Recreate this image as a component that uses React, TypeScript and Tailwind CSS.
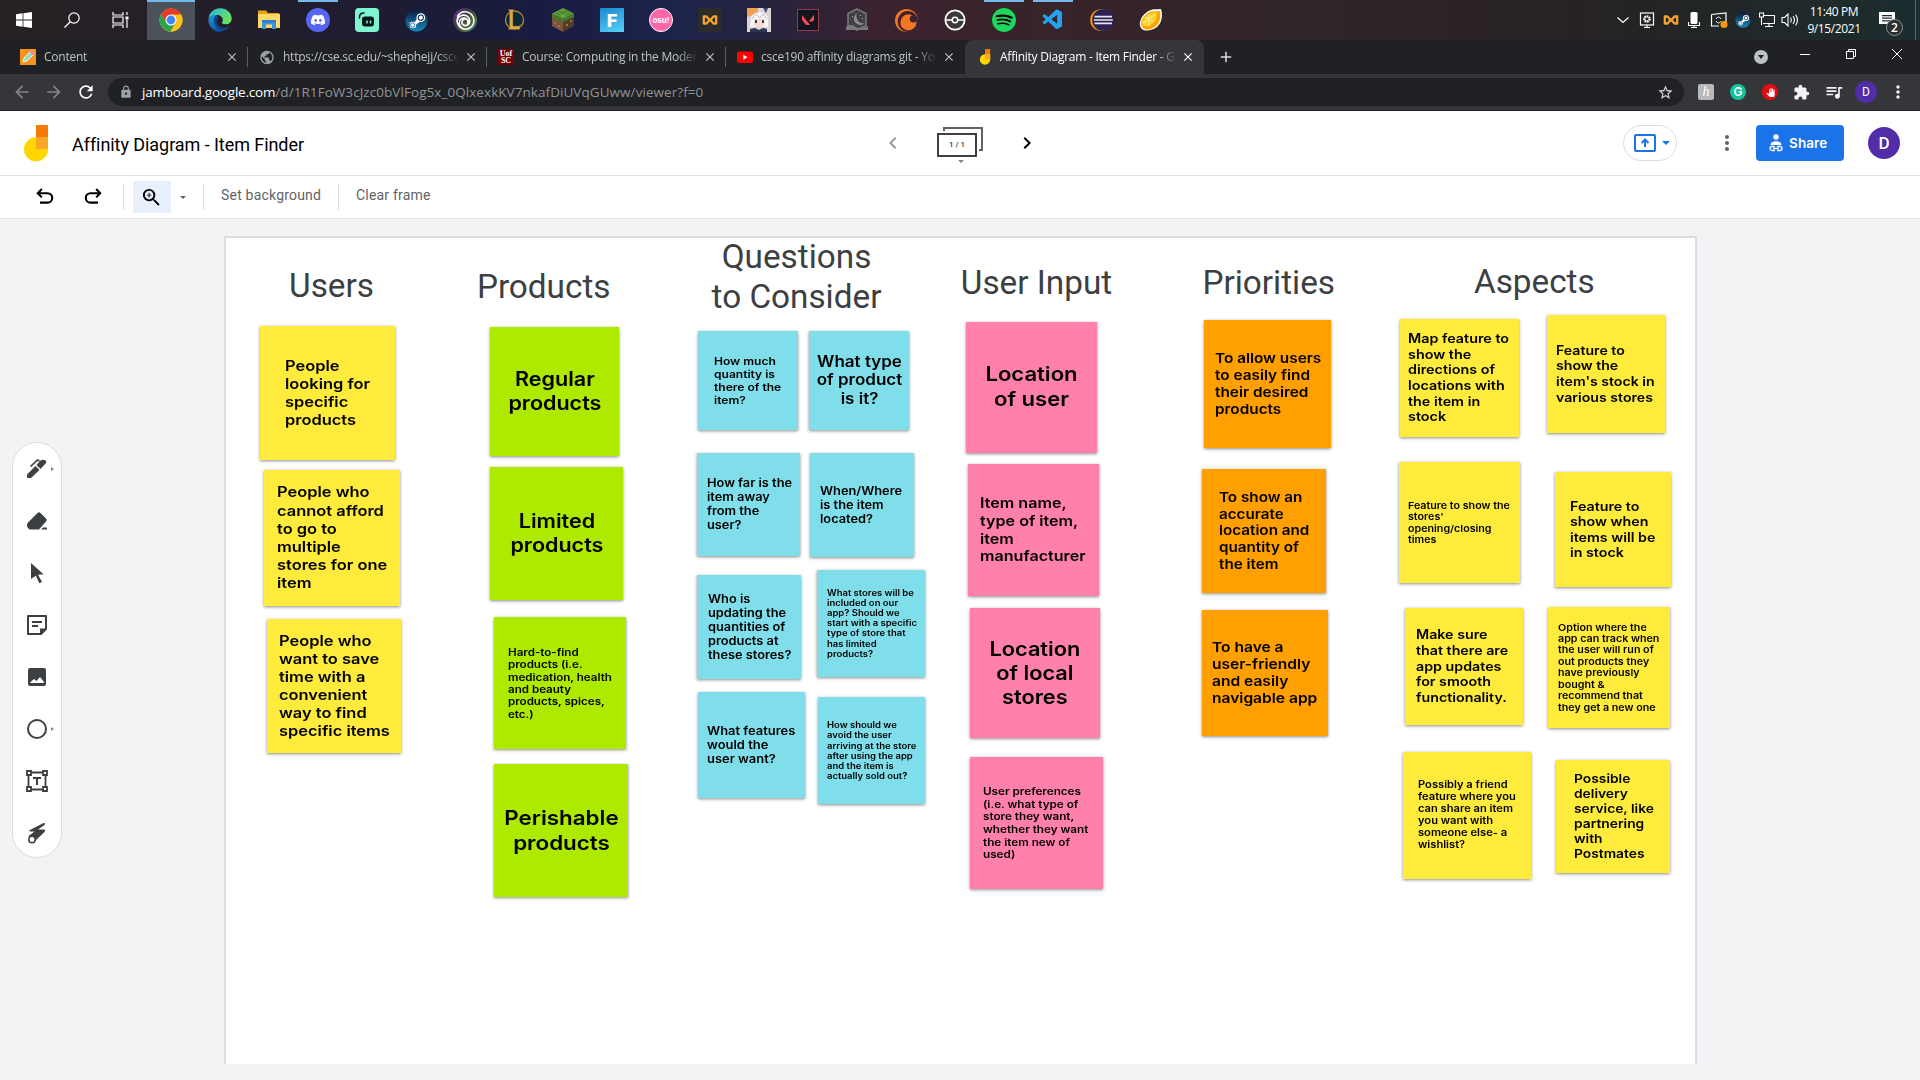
import React from 'react';
import { SiDiscord, SiUbisoft, SiSpotify, SiCrunchyroll, SiValorant } from 'react-icons/si';
import { VscVscode } from 'react-icons/vsc';
import {
  MdZoomIn, MdMoreVert, MdChevronLeft, MdChevronRight, MdArrowBack, MdArrowForward,
  MdRefresh, MdLock, MdStarBorder, MdExtension, MdQueueMusic, MdPublic, MdPanTool, MdClose, MdAdd,
} from 'react-icons/md';

type Note = {
  x: number; y: number; w: number; h: number;
  color: string; size: number; pitch: number;
  left?: number; lines: string[];
};

const Y = 'bg-[#ffeb3b]';
const G = 'bg-[#aeea00]';
const B = 'bg-[#80deea]';
const P = 'bg-[#ff80ab]';
const O = 'bg-[#ff9f00]';

const notes: Note[] = [
  { x: 259.7, y: 325.3, w: 135.3, h: 134.7, color: Y, size: 15, pitch: 18, left: 284.7, lines: ['People', 'looking for', 'specific', 'products'] },
  { x: 263.2, y: 470, w: 136.5, h: 136, color: Y, size: 15, pitch: 18.2, left: 277, lines: ['People who', 'cannot afford', 'to go to', 'multiple', 'stores for one', 'item'] },
  { x: 267, y: 619, w: 134.7, h: 134, color: Y, size: 15, pitch: 18, left: 279.6, lines: ['People who', 'want to save', 'time with a', 'convenient', 'way to find', 'specific items'] },
  { x: 490, y: 327, w: 129.3, h: 129, color: G, size: 20, pitch: 24.3, lines: ['Regular', 'products'] },
  { x: 490, y: 467, w: 133.5, h: 133, color: G, size: 20, pitch: 24, lines: ['Limited', 'products'] },
  { x: 494, y: 617, w: 132.3, h: 132, color: G, size: 10.4, pitch: 12.4, left: 508.3, lines: ['Hard-to-find', 'products (i.e.', 'medication, health', 'and beauty', 'products, spices,', 'etc.)'] },
  { x: 494, y: 763.3, w: 134, h: 134, color: G, size: 20.8, pitch: 25, lines: ['Perishable', 'products'] },
  { x: 697.8, y: 330.7, w: 100.2, h: 100, color: B, size: 10.8, pitch: 13, left: 713.7, lines: ['How much', 'quantity is', 'there of the', 'item?'] },
  { x: 809, y: 330.7, w: 100.2, h: 100, color: B, size: 15.8, pitch: 18.5, lines: ['What type', 'of product', 'is it?'] },
  { x: 696.7, y: 452.3, w: 103.8, h: 104, color: B, size: 11.7, pitch: 14, left: 706.7, lines: ['How far is the', 'item away', 'from the', 'user?'] },
  { x: 809.3, y: 452.3, w: 105, h: 105, color: B, size: 11.7, pitch: 14, left: 820.5, lines: ['When/Where', 'is the item', 'located?'] },
  { x: 696.7, y: 575, w: 104, h: 104.3, color: B, size: 11.7, pitch: 14, left: 708.5, lines: ['Who is', 'updating the', 'quantities of', 'products at', 'these stores?'] },
  { x: 817, y: 569.3, w: 108.5, h: 108, color: B, size: 8.5, pitch: 10.2, left: 826.7, lines: ['What stores will be', 'included on our', 'app? Should we', 'start with a specific', 'type of store that', 'has limited', 'products?'] },
  { x: 698, y: 691.5, w: 107, h: 106.5, color: B, size: 11.8, pitch: 14, left: 707.3, lines: ['What features', 'would the', 'user want?'] },
  { x: 817.3, y: 697, w: 107.5, h: 107.5, color: B, size: 8.5, pitch: 10.2, left: 827, lines: ['How should we', 'avoid the user', 'arriving at the store', 'after using the app', 'and the item is', 'actually sold out?'] },
  { x: 965.5, y: 321.3, w: 132, h: 132, color: P, size: 20.5, pitch: 25, lines: ['Location', 'of user'] },
  { x: 967.3, y: 463.3, w: 132.3, h: 132.7, color: P, size: 14.7, pitch: 17.7, left: 980.3, lines: ['Item name,', 'type of item,', 'item', 'manufacturer'] },
  { x: 969.7, y: 608, w: 130.3, h: 130, color: P, size: 20.2, pitch: 24, lines: ['Location', 'of local', 'stores'] },
  { x: 969.7, y: 756.5, w: 133.7, h: 133, color: P, size: 10.5, pitch: 12.6, left: 983.3, lines: ['User preferences', '(i.e. what type of', 'store they want,', 'whether they want', 'the item new of', 'used)'] },
  { x: 1203.6, y: 320, w: 128, h: 128, color: O, size: 14, pitch: 17, left: 1215, lines: ['To allow users', 'to easily find', 'their desired', 'products'] },
  { x: 1202, y: 468.5, w: 124.7, h: 124.5, color: O, size: 13.9, pitch: 16.7, left: 1219.5, lines: ['To show an', 'accurate', 'location and', 'quantity of', 'the item'] },
  { x: 1201.2, y: 609.5, w: 127.2, h: 127, color: O, size: 14.2, pitch: 17, left: 1212, lines: ['To have a', 'user-friendly', 'and easily', 'navigable app'] },
  { x: 1399.7, y: 318.7, w: 119.2, h: 118.5, color: Y, size: 13.1, pitch: 15.7, left: 1408.5, lines: ['Map feature to', 'show the', 'directions of', 'locations with', 'the item in', 'stock'] },
  { x: 1546.5, y: 314.7, w: 119, h: 118.5, color: Y, size: 12.9, pitch: 15.6, left: 1556, lines: ['Feature to', 'show the', "item's stock in", 'various stores'] },
  { x: 1398.3, y: 461.7, w: 122.3, h: 122, color: Y, size: 9.6, pitch: 11.4, left: 1408.3, lines: ['Feature to show the', "stores'", 'opening/closing', 'times'] },
  { x: 1554.8, y: 471.7, w: 116.5, h: 116, color: Y, size: 13, pitch: 15.3, left: 1570, lines: ['Feature to', 'show when', 'items will be', 'in stock'] },
  { x: 1404.5, y: 607.4, w: 118.8, h: 118, color: Y, size: 13, pitch: 15.6, left: 1416.5, lines: ['Make sure', 'that there are', 'app updates', 'for smooth', 'functionality.'] },
  { x: 1547.8, y: 606.5, w: 122.3, h: 121.6, color: Y, size: 9.6, pitch: 11.4, left: 1558.5, lines: ['Option where the', 'app can track when', 'the user will run of', 'out products they', 'have previously', 'bought &', 'recommend that', 'they get a new one'] },
  { x: 1402.7, y: 752, w: 128, h: 127, color: Y, size: 10, pitch: 12, left: 1418, lines: ['Possibly a friend', 'feature where you', 'can share an item', 'you want with', 'someone else- a', 'wishlist?'] },
  { x: 1556, y: 760, w: 113.8, h: 113, color: Y, size: 12.6, pitch: 15, left: 1574, lines: ['Possible', 'delivery', 'service, like', 'partnering', 'with', 'Postmates'] },
];

const headings = [
  { cx: 331.5, base: 297.5, lines: ['Users'] },
  { cx: 543.7, base: 298.5, lines: ['Products'] },
  { cx: 796.5, base: 268.5, lines: ['Questions', 'to Consider'] },
  { cx: 1036.5, base: 294.5, lines: ['User Input'] },
  { cx: 1268.7, base: 294.5, lines: ['Priorities'] },
  { cx: 1534.3, base: 293.5, lines: ['Aspects'] },
];

/* Screen coordinates of the board's inner corner. */
const OX = 226;
const OY = 238;

function Sticky({ n }: { n: Note }) {
  const centered = n.left === undefined;
  const small = n.size < 11;
  const stretch = centered ? 1.11 : small ? 1.15 : 1.13;
  return (
    <div
      className={`absolute flex items-center shadow-[0_1px_3px_rgba(0,0,0,0.45)] ${n.color} ${centered ? 'justify-center text-center' : ''}`}
      style={{ left: n.x - OX + 0.3, top: n.y - OY + 0.2, width: n.w - 0.5, height: n.h - 0.4, paddingLeft: centered ? 0 : n.left! - n.x - 0.4 }}
    >
      <div
        className={`whitespace-nowrap text-black ${small ? 'font-[560]' : 'font-semibold'} ${centered ? 'origin-center' : 'origin-left'}`}
        style={{ fontSize: n.size * 0.97, lineHeight: `${n.pitch}px`, transform: `scaleX(${stretch})` }}
      >
        {n.lines.map((l) => <div key={l}>{l}</div>)}
      </div>
    </div>
  );
}

/* ---------- taskbar icons ---------- */

const Chrome = () => (
  <svg viewBox="0 0 48 48" className="size-6">
    <circle cx="24" cy="24" r="23" fill="#fbc116" />
    <path d="M24 24 4.1 12.5A23 23 0 0 1 43.9 12.5Z" fill="#e33b2e" />
    <path d="M24 13h20.2A23 23 0 0 0 4 12.8L14.5 30Z" fill="#e33b2e" />
    <path d="M4.1 12.5A23 23 0 0 0 23 47L33.5 29.5 14.5 29.5Z" fill="#2ba24c" />
    <path d="M44.2 13H24l9.5 16.5L23 47A23 23 0 0 0 44.2 13Z" fill="#fbc116" />
    <circle cx="24" cy="24" r="11" fill="#fff" />
    <circle cx="24" cy="24" r="8.8" fill="#4285f4" />
  </svg>
);
const Edge = () => (
  <svg viewBox="0 0 24 24" className="size-6">
    <defs>
      <linearGradient id="e1" x1="0" y1="0" x2="1" y2="0.5"><stop offset="0" stopColor="#29b6ea" /><stop offset="1" stopColor="#6be25c" /></linearGradient>
      <linearGradient id="e2" x1="0" y1="0" x2="0.4" y2="1"><stop offset="0" stopColor="#1b9de2" /><stop offset="1" stopColor="#0b57a8" /></linearGradient>
    </defs>
    <path d="M.5 11C1 4.500 6 .3 12.200.3 18.500.3 23.700 5 23.700 10.500c0 3.500-2.700 5.800-6 5.800-2.500 0-3.900-.8-3.900-1.500 0-.6 1-1 1-2.900C14.800 9.300 12.400 7 9 7 4.500 7 1.500 9 .5 11Z" fill="url(#e1)" />
    <path d="M.4 11.500C1.500 8.500 5 6.700 9 7c-2 .8-3.300 3.500-3 6.500C6.500 18.500 11 22.500 16 22.200c-1.300 1-3 1.600-4.500 1.500C5 23.500.2 18 .4 11.500Z" fill="url(#e2)" />
    <path d="M10 9.500c-2 2-2 6 .5 8.300 3 2.800 7.500 2.600 11.500.2-1.300 2.300-3.500 4-6 4.300C11 22.500 6.500 18.500 6 13.500 5.800 10 7.500 8 9.500 7.300Z" fill="#114a8b" />
  </svg>
);
const Folder = () => (
  <svg viewBox="0 0 24 24" className="size-6">
    <path d="M1 4V2.500h8L11 5h11v5H1Z" fill="#e5a50a" />
    <path d="M1 6h22v14H1Z" fill="#ffd867" />
    <path d="M5 13h14v8h-4v-4.500H9V21H5Z" fill="#3a96dd" />
    <path d="M5 12h14v2.500H5Z" fill="#2b7cd3" />
  </svg>
);
const Discord = () => (
  <span className="flex size-6 items-center justify-center rounded-full bg-[#5865f2] text-white"><SiDiscord size={14} /></span>
);
const Streamlabs = () => (
  <svg viewBox="0 0 24 24" className="size-6">
    <rect width="24" height="24" rx="4" fill="#80f5d2" />
    <path d="M4.500 10C4 6.500 6 5 9 5" fill="none" stroke="#09161d" strokeWidth="1.600" strokeLinecap="round" />
    <rect x="7" y="8.500" width="12" height="10" rx="3" fill="#09161d" />
    <path d="M12 12.500v3M15.500 12.500v3" stroke="#80f5d2" strokeWidth="1.500" />
  </svg>
);
const Steam = ({ c, id }: { c: string; id: string }) => (
  <svg viewBox="0 0 24 24" className={c}>
    <defs><linearGradient id={id} x1="0" y1="0" x2="0" y2="1"><stop offset="0" stopColor="#0d1a3c" /><stop offset="1" stopColor="#1689bd" /></linearGradient></defs>
    <circle cx="12" cy="12" r="11.500" fill={`url(#${id})`} />
    <path d="M.6 12.500 8.500 15.500 15 7.500 18 11.500 10.500 17Z" fill="#fff" />
    <circle cx="16.500" cy="9" r="4.600" fill="#fff" />
    <circle cx="16.500" cy="9" r="2.700" fill="#fff" stroke="#132a55" strokeWidth="1.100" />
    <circle cx="8.300" cy="16.800" r="3.400" fill="#fff" />
    <circle cx="8" cy="16.800" r="2.200" fill="none" stroke="#1a6c9f" strokeWidth=".9" />
  </svg>
);
const Ubisoft = () => (
  <span className="flex size-6 items-center justify-center rounded-full bg-[linear-gradient(135deg,#6f2f90,#3a3f48_40%,#5a6b38_70%,#2b93c9)] text-white"><SiUbisoft size={19} /></span>
);
const League = () => (
  <svg viewBox="0 0 24 24" className="size-6">
    <circle cx="12.500" cy="12" r="9" fill="#0a2a38" stroke="#b98a35" strokeWidth="1.300" />
    <path d="M6 1.500h6l-1 2V18h6.500l1-2-.8 5.500H6L7.500 19V3.500Z" fill="#dca94a" stroke="#6d4b16" strokeWidth=".5" />
  </svg>
);
const Minecraft = () => (
  <svg viewBox="0 0 24 24" className="size-6">
    <path d="M12 0 23 5.500 12 11 1 5.500Z" fill="#5f9f3c" />
    <path d="m8 3 4 2 4-2M5 5l4 2M15 7l4-2" stroke="#3f7a28" strokeWidth="1.200" fill="none" />
    <path d="M1 5.500 12 11v13L1 18Z" fill="#79553a" />
    <path d="M23 5.500 12 11v13l11-6Z" fill="#563a27" />
    <path d="M1 5.500 12 11v3l-3-2v2l-3-3v1.500L3 10v1L1 9ZM23 5.500 12 11v3l3-2v1.500l3-3v1l3-2v1l2-1.500Z" fill="#437b2c" />
    <path d="M3 14h2v2H3zM7 17h2v2H7zM15 16h2v2h-2zM19 12h2v2h-2z" fill="#9a7350" />
  </svg>
);
const Fortnite = () => (
  <span className="flex size-6 items-center justify-center bg-[linear-gradient(160deg,#1c86d1,#55d4f5)] font-['Roboto'] text-[19px] leading-none font-black text-white">F</span>
);
const Osu = () => (
  <span className="flex size-6 items-center justify-center rounded-full border border-white bg-[#ff66aa] font-['Inter'] text-[8px] leading-none font-bold text-white">osu!</span>
);
const Bowtie = ({ c = 'size-4' }: { c?: string }) => (
  <svg viewBox="0 0 16 16" className={c}>
    <path d="M1.800 4.500 4.500 4.500 8 8.500 11.500 4.500 14.200 4.500v7H11.500L8 7.500 4.500 11.500H1.800Z" fill="none" stroke="#f7a331" strokeWidth="2.300" strokeLinejoin="round" />
  </svg>
);
const Paimon = () => (
  <svg viewBox="0 0 24 24" className="size-6">
    <path d="M0 0h24v24H0z" fill="#dcd5d8" />
    <path d="M0 0h11v5L0 9z" fill="#f0a052" /><path d="M16 0h5l-2 5z" fill="#354879" />
    <path d="M4 10c2-7 14-8 17 0v9H3z" fill="#f9f4f1" />
    <path d="M7 11h10v6l-5 3-5-3z" fill="#f7dcca" />
    <path d="M8 12h2v3H8zM15 12h2v3h-2z" fill="#39406b" />
    <path d="M3 24v-3l5-1 4 2 4-2 4 1v3z" fill="#303553" /><path d="m5 11 4-5 4 4 3-4 4 5" fill="none" stroke="#b8bfd6" />
  </svg>
);
const Valorant = () => (
  <span className="flex size-[22px] items-center justify-center border border-[#97374a] bg-[#10151f] text-[#ff4655]"><SiValorant size={12} /></span>
);
const Moon = () => (
  <svg viewBox="0 0 24 24" className="size-6">
    <path d="m12 1 9 4.500v12L12 22 3 17.500v-12Z" fill="#404047" stroke="#77777b" strokeWidth="1.600" />
    <path d="M12 5c-4 3-4.500 8 0 11 3 2 6 1 7-1-2 .5-5 0-6.500-3S11 7 12 5Z" fill="#8a8a8e" />
    <path d="M1 19c4-3 7-2 10 0s8 1 12-1v4H1Z" fill="#7a7a7e" />
    <path d="M15 7h1v1h-1zM17 10h1v1h-1zM7 8h1v1H7z" fill="#aaa" />
  </svg>
);
const Pokeball = () => (
  <svg viewBox="0 0 24 24" className="size-[22px]">
    <circle cx="12" cy="12" r="10.500" fill="#3a3a3c" stroke="#fff" strokeWidth="2" />
    <path d="M2 12h7M15 12h7" stroke="#fff" strokeWidth="1.600" /><circle cx="12" cy="12" r="3" fill="none" stroke="#fff" strokeWidth="1.600" />
  </svg>
);
const Spotify = () => (
  <span className="flex size-6 items-center justify-center rounded-full bg-black text-[#1ed760]"><SiSpotify size={24} /></span>
);
const Eclipse = () => (
  <svg viewBox="0 0 24 24" className="size-6">
    <circle cx="11" cy="12" r="10.800" fill="#f7941e" /><circle cx="13" cy="12" r="10.800" fill="#2c2255" />
    <path d="M4.500 8.700h17.500M3.800 12h19M4.500 15.300h17.500" stroke="#e7e5ef" strokeWidth="1.700" />
  </svg>
);
const Lemon = () => (
  <svg viewBox="0 0 24 24" className="size-6">
    <path d="M22 1c2 6 1 14-4 18-5 4-13 5-16 1S2 8 8 4s9-2 14-3Z" fill="#fff" />
    <path d="M21 3c1 6 0 12-4 15-4 4-11 5-14 1C0 15 4 8 9 5s8-1 12-2Z" fill="#f9a602" />
    <path d="M17 4c2 4 0 9-4 12S4 19 3 16s3-8 7-10 6-1 7-2Z" fill="#ffd02c" />
    <path d="M4 15 17 6M6 9l8 5M10 6v12" stroke="#fff3b8" strokeWidth=".9" />
  </svg>
);

const apps: { icon: React.ReactNode; bar?: boolean; active?: boolean }[] = [
  { icon: <svg viewBox="0 0 16 16" className="size-4 fill-white"><path d="M0 2.200 6.600 1.300v6.300H0zM7.400 1.200 16 0v7.600H7.400zM0 8.400h6.600v6.300L0 13.800zM7.400 8.400H16V16l-8.600-1.200z" /></svg> },
  { icon: <svg viewBox="0 0 16 16" className="mr-[2px] size-4 fill-none stroke-white"><circle cx="10" cy="6" r="5.200" strokeWidth="1.200" /><path d="M6.300 9.700.5 15.500" strokeWidth="1.300" /></svg> },
  { icon: <svg viewBox="0 0 18 18" className="mr-[3px] size-[18px] fill-none stroke-white" strokeWidth="1.200"><path d="M1 1v3h10V1M1 17v-3h10v3M1 6h10v6H1zM15 1v3M15 9v8" /><path d="M13.500 5.500h3v3h-3z" fill="#fff" stroke="none" /></svg> },
  { icon: <Chrome />, active: true },
  { icon: <Edge /> },
  { icon: <Folder /> },
  { icon: <Discord />, bar: true },
  { icon: <Streamlabs /> },
  { icon: <Steam c="size-[23px]" id="s1" /> },
  { icon: <Ubisoft /> },
  { icon: <League /> },
  { icon: <Minecraft /> },
  { icon: <Fortnite /> },
  { icon: <Osu /> },
  { icon: <span className="flex size-6 items-center justify-center bg-[#2c2c2c]"><Bowtie /></span> },
  { icon: <Paimon /> },
  { icon: <Valorant /> },
  { icon: <Moon /> },
  { icon: <SiCrunchyroll size={23} color="#f47521" /> },
  { icon: <Pokeball /> },
  { icon: <Spotify />, bar: true },
  { icon: <VscVscode size={24} color="#23a2ee" />, bar: true },
  { icon: <Eclipse /> },
  { icon: <Lemon /> },
];

function Taskbar() {
  return (
    <div className="flex h-10 shrink-0 justify-between bg-[linear-gradient(90deg,#272124_0,#241f27_180px,#1d1c33_400px,#191c42_540px,#1d234a_680px,#25233f_760px,#3c2230_880px,#382329_1040px,#30252a_1280px,#292226_1500px,#242323_1640px,#20292a_1780px,#1c2d2f_1920px)]">
      <div className="flex gap-px">
        {apps.map((a, i) => (
          <div key={i} className={`relative flex w-12 items-center justify-center ${a.active ? 'bg-[#4b5259]' : ''}`}>
            {a.icon}
            {(a.bar || a.active) && <span className={`absolute top-0 h-[2px] bg-[#76b9ed] ${a.active ? 'w-12' : 'w-10'}`} />}
          </div>
        ))}
      </div>
      <div className="flex items-center text-white">
        <svg viewBox="0 0 12 12" className="size-3 fill-none stroke-white"><path d="m.5 3.500 5.500 5 5.500-5" strokeWidth="1.200" /></svg>
        <svg viewBox="0 0 16 16" className="ml-[10px] size-4 fill-none stroke-white"><rect x="1.500" y="1" width="13" height="12" strokeWidth="1.200" /><circle cx="8" cy="7" r="2.600" strokeWidth="2.400" strokeDasharray="1.700 .6" /><path d="M8 13v3M5 15.500h6" strokeWidth="1.200" /></svg>
        <Bowtie c="ml-2 size-4" />
        <svg viewBox="0 0 16 16" className="ml-[7px] size-4"><rect x="4.500" y="0" width="7" height="12" rx="1.500" fill="#fff" /><path d="M2.500 10v3.500h11V10M8 13v2.500M5 15.500h6" fill="none" stroke="#fff" strokeWidth="1.100" /></svg>
        <svg viewBox="0 0 18 16" className="ml-2 h-4 w-[18px] fill-none stroke-white"><path d="M1.500 2.500 16 1v9M1.500 2.500V14H9" strokeWidth="1.200" /><path d="M6 7c1-2.500 4-2.500 5 0M11 9c-1 2.500-4 2.500-5 0" /><circle cx="14" cy="12.500" r="3.500" fill="#ff9800" stroke="none" /></svg>
        <Steam c="ml-[7px] size-4" id="s2" />
        <svg viewBox="0 0 16 16" className="ml-2 size-4 fill-none stroke-white"><path d="M5 3.500h10.500v8H4M10 11.500V14M6 14.500h8M.5 1h4v4h-4zM2.500 5v8" strokeWidth="1.100" /></svg>
        <svg viewBox="0 0 18 16" className="ml-[6px] h-4 w-[18px] fill-none stroke-white"><path d="M1 5.500h2.500L7 2v12l-3.500-3.500H1ZM9.500 5.500q1.600 2.500 0 5M12 4q3 4 0 8M14.500 2.500q4 5.500 0 11" strokeWidth="1.100" /></svg>
        <div className="ml-[8px] w-[54px] text-center font-['Open_Sans'] text-[12px] leading-[17px] tracking-[-0.4px] whitespace-nowrap">
          <div>11:40 PM</div>
          <div>9/15/2021</div>
        </div>
        <div className="relative mt-2 ml-[18px] h-6 w-[26px]">
          <svg viewBox="0 0 16 16" className="size-4 fill-white"><path fillRule="evenodd" d="M0 0h16v12h-4v3l-3-3H0ZM3 3v1.200h10V3ZM3 5.600v1.200h10V5.600ZM3 8.200v1.200h8V8.200Z" /></svg>
          <span className="absolute top-[7px] left-[7px] flex size-[17px] items-center justify-center rounded-full border border-[#8a9294] bg-[#2a2f31] font-['Open_Sans'] text-[12px] leading-none font-semibold">2</span>
        </div>
        <span className="mr-[4px] ml-[10px] h-10 w-px bg-[#5d6768]" />
      </div>
    </div>
  );
}

const JamLogo = ({ c }: { c: string }) => (
  <svg viewBox="0 0 24 37" className={c}>
    <path d="M12 0h12v12H12z" fill="#f57c00" />
    <path d="M24 24.700A12 12 0 1 1 12 12.300h12Z" fill="#ffd600" />
    <path d="M12 12h12v12H12z" fill="#f9a825" />
  </svg>
);

const tabs: { title: string; icon: React.ReactNode; active?: boolean }[] = [
  { title: 'Content', icon: <svg viewBox="0 0 16 16" className="size-4"><path d="M0 0h16v16H0z" fill="#f7931e" /><path d="m3 13 1-4 7-7 3 3-7 7Z" fill="#8ee0c6" stroke="#fff" strokeWidth=".8" /><path d="m10 3 3 3 1-1-3-3Z" fill="#ec5fa0" /></svg> },
  { title: 'https://cse.sc.edu/~shephejj/csce190', icon: <MdPublic size={17} color="#9aa0a6" /> },
  { title: 'Course: Computing in the Modern World', icon: <span className="flex size-4 flex-col items-center justify-center bg-[#73000a] font-['Liberation_Serif'] text-[8px] leading-[7px] font-bold text-white"><span>Uof</span><span>SC</span></span> },
  { title: 'csce190 affinity diagrams git - YouTube', icon: <svg viewBox="0 0 16 16" className="size-4"><rect y="2.500" width="16" height="11.500" rx="2.500" fill="#f00" /><path d="m6.300 5.800 4.200 2.400-4.200 2.500Z" fill="#fff" /></svg> },
  { title: 'Affinity Diagram - Item Finder - Google', icon: <JamLogo c="ml-[2px] h-4 w-[12px]" />, active: true },
];

function TabStrip() {
  return (
    <div className="flex h-[34px] shrink-0 items-stretch bg-[#202124] pl-[9px]">
      {tabs.map((t, i) => (
        <div key={t.title} className={`flex w-[239px] shrink-0 items-center pl-[11px] ${t.active ? 'rounded-t-lg bg-[#35363a] text-white' : 'text-[#bdc1c6]'}`}>
          <span className="flex w-4 shrink-0 justify-center">{t.icon}</span>
          <span className="ml-2 w-[176px] overflow-hidden [mask-image:linear-gradient(90deg,#000_88%,transparent)] font-['Open_Sans'] text-[12px] leading-4 tracking-[-0.25px] whitespace-nowrap">{t.title}</span>
          <MdClose size={14} className="ml-[5px] shrink-0" />
          {i < 3 && <span className="ml-auto h-5 w-px bg-[#5a5d61]" />}
        </div>
      ))}
      <MdAdd size={18} className="ml-[13px] self-center text-[#dadce0]" />
      <div className="ml-auto flex">
        <span className="mt-[10px] flex size-[14px] items-center justify-center rounded-full bg-[#bdc1c6]"><span className="border-x-[3px] border-t-[4px] border-x-transparent border-t-[#202124]" /></span>
        <span className="mt-[14px] ml-[32px] h-px w-[10px] bg-white" />
        <svg viewBox="0 0 10 10" className="mt-[9px] ml-[36px] size-[10px] fill-none stroke-white"><path d="M.5 2.500h7v7h-7zM2.500 2.500v-2h7v7h-2" /></svg>
        <svg viewBox="0 0 10 10" className="mt-[9px] mr-[18px] ml-[36px] size-[10px] fill-none stroke-white"><path d="m0 0 10 10M10 0 0 10" /></svg>
      </div>
    </div>
  );
}

function AddressBar() {
  return (
    <div className="flex h-[37px] shrink-0 items-start border-b border-[#202124] bg-[#35363a] pt-1">
      <div className="flex h-7 w-[108px] items-center gap-[12px] pl-[12px]">
        <MdArrowBack size={20} color="#85868a" />
        <MdArrowForward size={20} color="#85868a" />
        <MdRefresh size={20} color="#fff" />
      </div>
      <div className="flex h-7 w-[1576px] items-center rounded-full bg-[#202124] pr-[10px] pl-[11px]">
        <MdLock size={14} color="#9aa0a6" />
        <span className="ml-[9px] font-['Open_Sans'] text-[13.500px] leading-5 tracking-[0.06px] whitespace-nowrap text-[#8f9398]"><span className="tracking-[-0.2px] text-white">jamboard.google.com</span>/d/1R1FoW3cJzc0bVlFog5x_0QlxexkKV7nkafDiUVqGUww/viewer?f=0</span>
        <MdStarBorder size={17} color="#dadce0" className="ml-auto" />
      </div>
      <div className="ml-[14px] flex h-7 items-center">
        <span className="flex size-4 items-center justify-center rounded-[2px] bg-[#b9b9b9] font-['Liberation_Serif'] text-[14px] leading-none text-white italic">h</span>
        <span className="ml-4 flex size-4 items-center justify-center rounded-full bg-[#15c39a] font-['Inter'] text-[12px] leading-none font-semibold text-white">G</span>
        <span className="ml-4 flex size-4 items-center justify-center rounded-full bg-[#e40d0d] text-white"><MdPanTool size={9} /></span>
        <MdExtension size={17} color="#f1f3f4" className="ml-[15px]" />
        <MdQueueMusic size={20} color="#f1f3f4" className="ml-[14px]" />
        <span className="ml-[11px] flex size-[22px] items-center justify-center rounded-full bg-[#512da8] font-['Roboto'] text-[12px] leading-none text-white">D</span>
        <MdMoreVert size={20} color="#f1f3f4" className="ml-[11px]" />
      </div>
    </div>
  );
}

function JamHeader() {
  return (
    <div className="grid h-[65px] shrink-0 grid-cols-[1fr_160px_1fr] border-b border-[#e0e0e0] bg-white">
      <div className="flex">
        <JamLogo c="mt-[14px] ml-6 h-[37px] w-6" />
        <span className="mt-[22px] ml-6 text-[18px] leading-6 tracking-[-0.06px] text-black">Affinity Diagram - Item Finder</span>
      </div>
      <div className="flex justify-between">
        <MdChevronLeft size={24} color="#9a9a9a" className="mt-5 ml-[1px]" />
        <div className="relative mt-[16px] h-[38px] w-[46px]">
          <span className="absolute top-0 right-0 h-6 w-10 border-2 border-[#5f6368]" />
          <span className="absolute top-[4px] left-[-2px] h-[28px] w-[44px] bg-white" />
          <span className="absolute top-[6px] left-0 flex h-6 w-10 items-center justify-center border-2 border-[#3c4043] text-[8px] leading-none font-medium text-[#3c4043]">1 / 1</span>
          <span className="absolute top-[33px] left-[21px] border-x-[3px] border-t-[3px] border-x-transparent border-t-[#80868b]" />
        </div>
        <MdChevronRight size={24} color="#000" className="mt-5 mr-[1px]" />
      </div>
      <div className="flex items-start justify-end pt-[14px] pr-5">
        <div className="flex h-9 w-[54px] items-center justify-center rounded-full border border-[#dadce0] pl-[4px]">
          <svg viewBox="0 0 22 18" className="h-[18px] w-[22px] fill-none stroke-[#1a73e8]" strokeWidth="2"><rect x="1" y="1" width="20" height="16" rx="1" /><path d="M11 13V6M7.500 9 11 5.500 14.500 9" /></svg>
          <span className="ml-[6px] border-x-4 border-t-4 border-x-transparent border-t-[#1a73e8]" />
        </div>
        <MdMoreVert size={24} color="#5f6368" className="mt-[6px] ml-[38px]" />
        <div className="ml-[17px] flex h-9 w-[88px] items-center rounded bg-[#1a73e8] pb-px pl-[13px] text-white">
          <svg viewBox="0 0 14 18" className="h-[18px] w-[14px]"><circle cx="7" cy="3" r="2.700" fill="#fff" /><path d="M1.500 11c0-5 11-5 11 0Z" fill="#fff" /><path d="M6 16.500H3a2 2 0 0 1 0-4h3M8 12.500h3a2 2 0 0 1 0 4H8M4 14.500h6" fill="none" stroke="#fff" strokeWidth="1.300" /></svg>
          <span className="ml-[6px] font-['Inter'] text-[13.500px] leading-5 font-semibold tracking-[0.1px]">Share</span>
        </div>
        <span className="mt-[2px] ml-6 flex size-8 items-center justify-center rounded-full bg-[#512da8] text-[17px] leading-none font-medium text-white">D</span>
      </div>
    </div>
  );
}

const UndoArrow = ({ c }: { c: string }) => (
  <svg viewBox="0 0 24 24" className={c}>
    <path d="M8.800 4 4.800 8.200 8.800 12.400M5 8.200H14.500a4.700 4.700 0 0 1 0 9.400H7" fill="none" stroke="#000" strokeWidth="2.100" />
  </svg>
);

function JamToolbar() {
  return (
    <div className="flex h-[43px] shrink-0 items-center border-b border-[#e4e5e7] bg-white text-[14px] text-[#5f6368]">
      <UndoArrow c="ml-[33px] size-6" />
      <UndoArrow c="ml-[24px] size-6 -scale-x-100" />
      <span className="ml-[18px] h-[26px] w-px bg-[#dadce0]" />
      <span className="ml-[9px] flex h-8 w-[38px] items-center justify-center bg-[#e8f0fe] pr-px"><MdZoomIn size={23} color="#000" /></span>
      <span className="mr-px ml-[9px] border-x-[3px] border-t-[3px] border-x-transparent border-t-[#5f6368]" />
      <span className="ml-[16px] h-[26px] w-px bg-[#dadce0]" />
      <span className="ml-[17px] w-[99px] pb-[3px] tracking-[0.2px] whitespace-nowrap">Set background</span>
      <span className="ml-[18px] h-[26px] w-px bg-[#dadce0]" />
      <span className="ml-[17px] pb-[3px] tracking-[0.2px]">Clear frame</span>
    </div>
  );
}

const palette: { icon: React.ReactNode; more?: boolean }[] = [
  { icon: <><path d="M2 21v-3.500L10.500 9l4 4L6 21Z" /><path d="m11.500 8 4-4.500q3-1.500 5 0 1.500 1 .5 2.500l-5.500 6Z" /><path d="m5.500 9.500 7-6.500 2 1" fill="none" stroke="#3c4043" strokeWidth="1.700" /></>, more: true },
  { icon: <><path d="M2.500 14 12.500 4q1.500-1.500 3 0l5.500 5.500q1.500 1.500 0 3L14 20.500H4.500L2.500 18.500q-1.500-2.300 0-4.500ZM18 18.500H22v2h-6Z" /></> },
  { icon: <path d="M6 2 18.500 13.200 13 13.800 17 21 14.300 22.200 10.800 14.800 6 18Z" /> },
  { icon: <><path d="M3 3h18v13l-5 5H3Z" fill="none" stroke="#3c4043" strokeWidth="2" strokeLinejoin="round" /><path d="M15 21.500v-6h6.500ZM7 8h10v2H7zM7 12h6v2H7z" /></> },
  { icon: <path fillRule="evenodd" d="M5 3h14q2 0 2 2v14q0 2-2 2H5q-2 0-2-2V5q0-2 2-2Zm.5 15h13.500v-1L15 12l-3.500 4-2.500-2-4 3.500Z" /> },
  { icon: <circle cx="12" cy="12" r="9" fill="none" stroke="#3c4043" strokeWidth="2" />, more: true },
  { icon: <><path d="M3.500 3.500h17v17h-17Z" fill="none" stroke="#3c4043" strokeWidth="1.800" /><path d="M2 2h4v4H2zM18 2h4v4h-4zM2 18h4v4H2zM18 18h4v4h-4z" fill="#fff" stroke="#3c4043" strokeWidth="1.800" /><path d="M8 8h8v2h-3v6h-2v-6H8Z" /></> },
  { icon: <><path d="M4 9.500 18.500 2q2.500 0 1 2L13 8.500h6q2 .5.500 2.500L9.500 20.500 3.500 15l6-4.500H5Z" /><circle cx="7" cy="18.500" r="3.200" fill="#fff" stroke="#3c4043" strokeWidth="1.500" /></> },
];

function Palette() {
  return (
    <div className="mt-[223px] ml-3 flex h-[416px] w-[50px] shrink-0 flex-col items-center rounded-[25px] border border-[#dadce0] bg-white pt-[14px]">
      {palette.map((p, i) => (
        <div key={i} className={`relative flex w-full shrink-0 justify-center ${i === palette.length - 1 ? 'h-6' : 'h-[52px]'}`}>
          <svg viewBox="0 0 24 24" className="size-6 fill-[#3c4043]">{p.icon}</svg>
          {p.more && <span className="absolute top-[10px] right-[7px] border-y-[2.500px] border-l-[3px] border-y-transparent border-l-[#80868b]" />}
        </div>
      ))}
    </div>
  );
}

export default function App() {
  return (
    <div className="flex h-[1080px] w-[1920px] flex-col overflow-hidden bg-[#f1f3f4] font-['Roboto',sans-serif]">
      <Taskbar />
      <TabStrip />
      <AddressBar />
      <JamHeader />
      <JamToolbar />
      <main className="flex flex-1 items-start">
        <Palette />
        <div className="relative mt-[17px] ml-[162px] h-[828px] w-[1473px] border-2 border-b-0 border-[#dadce0] bg-white">
          {headings.map((h) => (
            <div key={h.lines[0]} className="absolute w-[240px] text-center text-[33.300px] leading-[40px] text-[#3c4043]" style={{ left: h.cx - OX - 120, top: h.base - OY - 31.3 }}>
              {h.lines.map((l) => <div key={l}>{l}</div>)}
            </div>
          ))}
          <div className="font-['Inter',sans-serif]">
            {notes.map((n) => <Sticky key={`${n.x}-${n.y}`} n={n} />)}
          </div>
        </div>
      </main>
    </div>
  );
}
